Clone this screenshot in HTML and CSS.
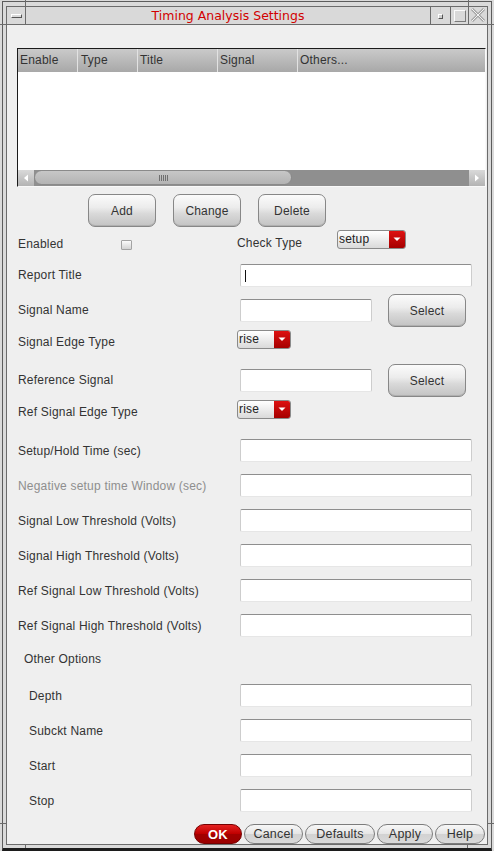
FILE: index.html
```html
<!DOCTYPE html>
<html>
<head>
<meta charset="utf-8">
<title>Timing Analysis Settings</title>
<link rel="stylesheet" href="styles.css">
</head>
<body>
<div class="wm">
  <span class="tick tick-v tick-tl"></span>
  <span class="tick tick-v tick-tr"></span>
  <span class="tick tick-v tick-bl"></span>
  <span class="tick tick-v tick-br"></span>
  <span class="tick tick-h tick-lt"></span>
  <span class="tick tick-h tick-lb"></span>
  <span class="tick tick-h tick-rt"></span>
  <span class="tick tick-h tick-rb"></span>
  <div class="edge">
    <div class="win">
      <div class="titlebar">
        <div class="tb-btn tb-menu"><span class="menu-bar"></span></div>
        <div class="tb-title">Timing Analysis Settings</div>
        <div class="tb-btn tb-min"><span class="min-box"></span></div>
        <div class="tb-btn tb-max"><span class="max-box"></span></div>
        <div class="tb-btn tb-close">
          <svg width="16" height="15" viewBox="0 0 16 15">
            <path d="M2 1 L14 13 M14 1 L2 13" stroke="#a4a4a4" stroke-width="3" fill="none"/>
            <path d="M2 1 L14 13 M14 1 L2 13" stroke="#f2f2f2" stroke-width="1" fill="none"/>
          </svg>
        </div>
      </div>

      <div class="content">
        <div class="table">
          <div class="thead">
            <div class="th c1">Enable</div>
            <div class="th c2">Type</div>
            <div class="th c3">Title</div>
            <div class="th c4">Signal</div>
            <div class="th c5">Others...</div>
          </div>
          <div class="tbody"></div>
          <div class="hscroll">
            <div class="sb-arrow">
              <svg width="16" height="16" viewBox="0 0 16 16"><polygon points="10,4.5 6,8 10,11.5" fill="#fff"/></svg>
            </div>
            <div class="sb-track"><div class="sb-thumb"><span class="grip"></span></div></div>
            <div class="sb-arrow">
              <svg width="16" height="16" viewBox="0 0 16 16"><polygon points="6,4.5 10,8 6,11.5" fill="#fff"/></svg>
            </div>
          </div>
        </div>

        <div class="actions">
          <button class="btn">Add</button>
          <button class="btn">Change</button>
          <button class="btn">Delete</button>
        </div>

        <div class="row r-enabled">
          <div class="lbl en-lbl">Enabled</div>
          <div class="chk-cell"><span class="chk"></span></div>
          <div class="lbl ct-lbl">Check Type</div>
          <div class="dd dd-setup">
            <span class="dd-text">setup</span>
            <span class="dd-btn"><svg width="16" height="17" viewBox="0 0 16 17"><polygon points="4.5,6.5 11.5,6.5 8,10" fill="#fff"/></svg></span>
          </div>
        </div>

        <div class="row r-report">
          <div class="lbl">Report Title</div>
          <div class="field full"><span class="caret"></span></div>
        </div>

        <div class="row r-select">
          <div class="lbl">Signal Name</div>
          <div class="field short"></div>
          <button class="btn sel">Select</button>
        </div>

        <div class="row r-edge">
          <div class="lbl">Signal Edge Type</div>
          <div class="dd dd-rise">
            <span class="dd-text">rise</span>
            <span class="dd-btn"><svg width="16" height="17" viewBox="0 0 16 17"><polygon points="4.5,6.5 11.5,6.5 8,10" fill="#fff"/></svg></span>
          </div>
        </div>

        <div class="row r-select">
          <div class="lbl">Reference Signal</div>
          <div class="field short"></div>
          <button class="btn sel">Select</button>
        </div>

        <div class="row r-edge r-edge2">
          <div class="lbl">Ref Signal Edge Type</div>
          <div class="dd dd-rise">
            <span class="dd-text">rise</span>
            <span class="dd-btn"><svg width="16" height="17" viewBox="0 0 16 17"><polygon points="4.5,6.5 11.5,6.5 8,10" fill="#fff"/></svg></span>
          </div>
        </div>

        <div class="row frow">
          <div class="lbl">Setup/Hold Time (sec)</div>
          <div class="field full"></div>
        </div>
        <div class="row frow">
          <div class="lbl disabled">Negative setup time Window (sec)</div>
          <div class="field full"></div>
        </div>
        <div class="row frow">
          <div class="lbl">Signal Low Threshold (Volts)</div>
          <div class="field full"></div>
        </div>
        <div class="row frow">
          <div class="lbl">Signal High Threshold (Volts)</div>
          <div class="field full"></div>
        </div>
        <div class="row frow">
          <div class="lbl">Ref Signal Low Threshold (Volts)</div>
          <div class="field full"></div>
        </div>
        <div class="row frow">
          <div class="lbl">Ref Signal High Threshold (Volts)</div>
          <div class="field full"></div>
        </div>

        <div class="row r-group">
          <div class="lbl group-lbl">Other Options</div>
        </div>

        <div class="row frow sub">
          <div class="lbl">Depth</div>
          <div class="field full"></div>
        </div>
        <div class="row frow sub">
          <div class="lbl">Subckt Name</div>
          <div class="field full"></div>
        </div>
        <div class="row frow sub">
          <div class="lbl">Start</div>
          <div class="field full"></div>
        </div>
        <div class="row frow sub">
          <div class="lbl">Stop</div>
          <div class="field full"></div>
        </div>

        <div class="footer">
          <button class="pill ok">OK</button>
          <button class="pill w-cancel">Cancel</button>
          <button class="pill w-defaults">Defaults</button>
          <button class="pill w-apply">Apply</button>
          <button class="pill w-help">Help</button>
        </div>
      </div>
    </div>
  </div>
</div>
</body>
</html>
```

FILE: styles.css
```css
* { box-sizing: border-box; }

html, body {
  margin: 0;
  padding: 0;
  background: #dadada;
}

body {
  font-family: "Liberation Sans", Arial, sans-serif;
  font-size: 12px;
  letter-spacing: 0.2px;
  color: #333333;
}

/* ---------- window manager frame ---------- */
.wm {
  position: relative;
  width: 494px;
  height: 851px;
  padding: 1px 2px 0 2px;
  background: #dadada;
}

.tick {
  position: absolute;
  background: #6b6b6b;
}
.tick-v { width: 1px; }
.tick-h { height: 1px; width: 6px; }
.tick-tl { left: 25px; top: 0; height: 6px; }
.tick-tr { left: 468px; top: 0; height: 6px; }
.tick-bl { left: 25px; top: 845px; height: 3px; }
.tick-br { left: 467px; top: 845px; height: 3px; }
.tick-lt { left: 0; top: 24px; }
.tick-lb { left: 0; top: 823px; }
.tick-rt { left: 488px; top: 24px; }
.tick-rb { left: 488px; top: 823px; }

.edge {
  height: 100%;
  border: 1px solid #5c5c5c;
  border-bottom: 3px solid #1c1c1c;
  padding: 4px 3px 3px 3px;
}

.win {
  height: 100%;
  border: 1px solid #6b6b6b;
  background: #efefef;
  display: flex;
  flex-direction: column;
}

/* ---------- title bar ---------- */
.titlebar {
  height: 18px;
  flex-shrink: 0;
  display: flex;
  background: #d9d9d9;
  border-bottom: 1px solid #6b6b6b;
}

.tb-btn {
  flex-shrink: 0;
  display: flex;
  align-items: center;
  justify-content: center;
}

.tb-menu {
  width: 19px;
  border-right: 1px solid #6b6b6b;
}
.menu-bar {
  display: block;
  width: 11px;
  height: 4px;
  margin-left: 1px;
  margin-top: 1px;
  background: #d9d9d9;
  border: 1px solid;
  border-color: #ffffff #555555 #555555 #ffffff;
}

.tb-title {
  flex: 1;
  text-align: center;
  font-family: "DejaVu Sans", sans-serif;
  font-size: 12.5px;
  letter-spacing: 0;
  line-height: 17px;
  color: #d20000;
}

.tb-min {
  width: 20px;
  border-left: 1px solid #6b6b6b;
}
.min-box {
  display: block;
  width: 5px;
  height: 5px;
  margin-top: 1px;
  border: 1px solid;
  border-color: #ffffff #555555 #555555 #ffffff;
  background: #cfcfcf;
}

.tb-max {
  width: 18px;
  border-left: 1px solid #6b6b6b;
}
.max-box {
  display: block;
  width: 12px;
  height: 12px;
  margin-top: 1px;
  border: 1px solid;
  border-color: #fbfbfb #7a7a7a #7a7a7a #fbfbfb;
}

.tb-close {
  width: 19px;
  border-left: 1px solid #6b6b6b;
}

/* ---------- content ---------- */
.content {
  flex: 1;
  display: flex;
  flex-direction: column;
  padding: 23px 1px 0 10px;
}

/* table */
.table {
  flex-shrink: 0;
  border: 1px solid;
  border-color: #1a1a1a #f9f9f9 #f9f9f9 #1a1a1a;
  background: #ffffff;
}

.thead {
  height: 23px;
  display: flex;
  background: linear-gradient(#cacaca, #a8a8a8);
}
.th {
  line-height: 23px;
  padding-left: 2px;
  color: #333333;
  white-space: nowrap;
  flex-shrink: 0;
}
.c1 { width: 59px; }
.c2 { width: 60px; border-left: 1px solid #e2e2e2; padding-left: 3px; }
.c3 { width: 80px; border-left: 1px solid #e2e2e2; padding-left: 2px; }
.c4 { width: 80px; border-left: 1px solid #e2e2e2; padding-left: 2px; }
.c5 { flex: 1; border-left: 1px solid #e2e2e2; padding-left: 2px; }

.tbody { height: 98px; }

.hscroll {
  height: 16px;
  display: flex;
  background: #8f8f8f;
}
.sb-arrow {
  width: 16px;
  flex-shrink: 0;
  background: linear-gradient(#d9d9d9, #b3b3b3);
  display: flex;
  align-items: center;
  justify-content: center;
}
.sb-arrow svg { display: block; }
.sb-track { flex: 1; }
.sb-thumb {
  width: 258px;
  height: 15px;
  border: 1px solid #8a8a8a;
  border-radius: 8px;
  background: linear-gradient(#c7c7c7, #b3b3b3);
  display: flex;
  align-items: center;
  justify-content: center;
}
.grip {
  display: block;
  width: 9px;
  height: 6px;
  background: repeating-linear-gradient(90deg, #6f6f6f 0 1px, transparent 1px 2px);
}

/* buttons */
.actions {
  display: flex;
  gap: 17px;
  margin-top: 7px;
  height: 33px;
  padding-left: 71px;
  flex-shrink: 0;
}

.btn {
  width: 68px;
  height: 33px;
  padding: 0;
  font-family: "Liberation Sans", Arial, sans-serif;
  font-size: 12px;
  letter-spacing: 0.2px;
  color: #333333;
  border: 1px solid #878787;
  border-radius: 7px;
  background: linear-gradient(#fbfbfb 0%, #ececec 40%, #d9d9d9 60%, #c3c3c3 100%);
  box-shadow: inset 0 -1px 0 #b0b0b0;
}

/* form rows */
.row {
  display: flex;
  flex-shrink: 0;
  padding-left: 1px;
}
.lbl {
  flex-shrink: 0;
  width: 222px;
  white-space: nowrap;
  color: #333333;
}
.lbl.disabled { color: #8e8e8e; }

.r-enabled {
  height: 37px;
  align-items: flex-start;
}
.en-lbl { width: 103px; margin-top: 10px; line-height: 14px; }
.chk-cell { width: 116px; flex-shrink: 0; margin-top: 13px; }
.chk {
  display: block;
  width: 11px;
  height: 10px;
  border: 1px solid #a3a3a3;
  border-radius: 1px;
  background: linear-gradient(#fbfbfb, #d3d3d3);
}
.ct-lbl { width: 100px; margin-top: 9px; line-height: 14px; }
.r-enabled .dd { margin-top: 3px; }

.field {
  height: 23px;
  flex-shrink: 0;
  background: #ffffff;
  border: 1px solid;
  border-color: #8e8e8e #cdcdcd #e6e6e6 #cdcdcd;
  border-radius: 2px;
  display: flex;
  align-items: center;
}
.field.full { width: 232px; }
.field.short { width: 132px; }
.caret {
  display: block;
  width: 1px;
  height: 12px;
  margin-left: 4px;
  background: #111111;
}

.r-report {
  height: 30px;
  align-items: flex-start;
}
.r-report .lbl { line-height: 23px; }

.r-select {
  height: 36px;
  align-items: flex-start;
}
.r-select .lbl { line-height: 33px; }
.r-select .field { margin-top: 5px; }
.btn.sel {
  width: 78px;
  margin-left: 16px;
}

.r-edge {
  height: 34px;
  align-items: flex-start;
}
.r-edge2 { height: 33px; }
.r-edge .lbl { width: 219px; line-height: 25px; }

/* dropdown */
.dd {
  display: flex;
  flex-shrink: 0;
  height: 19px;
  border: 1px solid #8a8a8a;
  border-radius: 3px;
  overflow: hidden;
  background: linear-gradient(#ffffff, #dadada);
}
.dd-setup { width: 69px; }
.dd-rise { width: 54px; }
.dd-text {
  flex: 1;
  padding-left: 1px;
  line-height: 16px;
  color: #222222;
}
.dd-btn {
  width: 16px;
  display: flex;
  align-items: center;
  justify-content: center;
  background: linear-gradient(#dd1212, #a60000);
}
.dd-btn svg { display: block; }

.frow {
  height: 35px;
  align-items: center;
}

.r-group {
  height: 35px;
  align-items: flex-start;
}
.group-lbl { padding-left: 6px; line-height: 33px; }

.sub .lbl { padding-left: 11px; }

/* footer */
.footer {
  display: flex;
  justify-content: flex-end;
  gap: 2px;
  margin-top: 6px;
  height: 20px;
  flex-shrink: 0;
  padding-right: 1px;
}
.pill {
  height: 20px;
  padding: 0;
  font-family: "Liberation Sans", Arial, sans-serif;
  font-size: 12.5px;
  letter-spacing: 0.2px;
  color: #333333;
  border: 1px solid #7c7c7c;
  border-radius: 10px;
  background: linear-gradient(#f7f7f7 0%, #e6e6e6 48%, #d2d2d2 52%, #d9d9d9 100%);
}
.ok {
  width: 48px;
  color: #ffffff;
  font-weight: bold;
  font-size: 13px;
  border-color: #760000;
  background: linear-gradient(#e42222 0%, #c00000 48%, #a20000 52%, #9a0000 100%);
}
.w-cancel { width: 59px; }
.w-defaults { width: 70px; }
.w-apply { width: 56px; }
.w-help { width: 50px; }
```
